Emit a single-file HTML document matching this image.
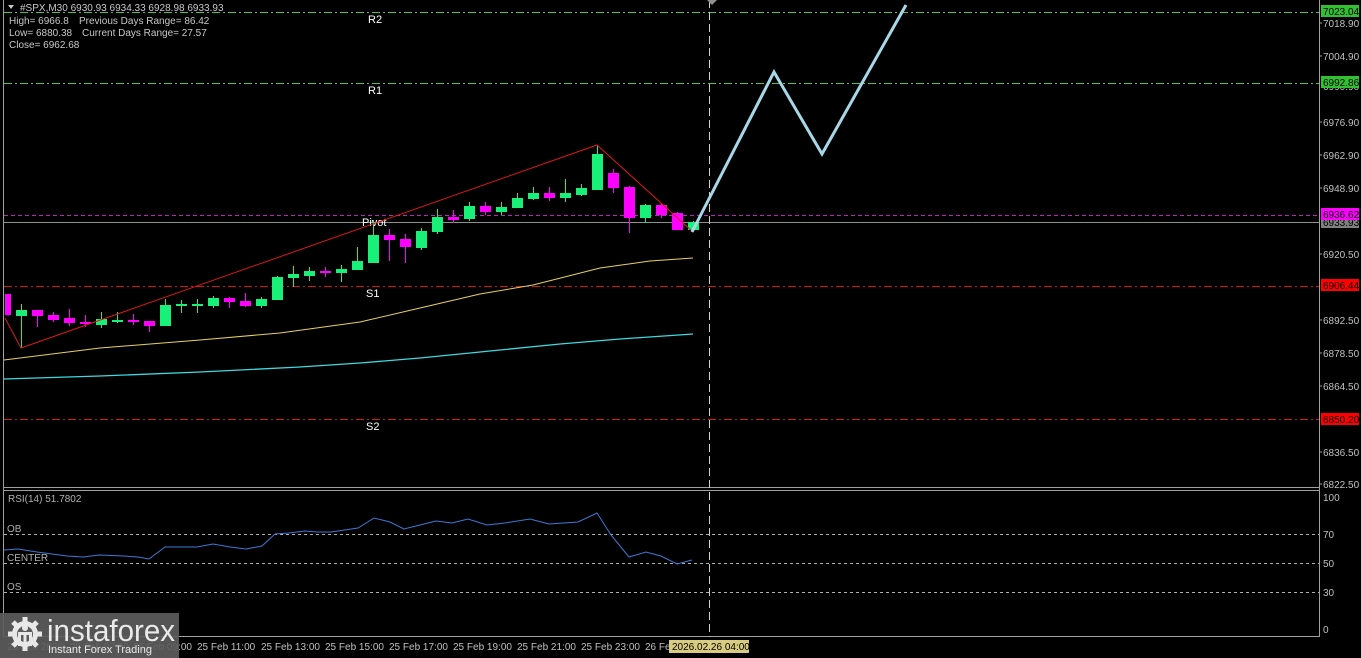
<!DOCTYPE html>
<html><head><meta charset="utf-8"><style>
html,body{margin:0;padding:0;background:#000;width:1361px;height:658px;overflow:hidden}
svg{display:block}
text{font-family:"Liberation Sans",sans-serif}
</style></head><body>
<svg width="1361" height="658" viewBox="0 0 1361 658" xmlns="http://www.w3.org/2000/svg">
<rect width="1361" height="658" fill="#000"/>
<line x1="3.5" y1="0" x2="3.5" y2="637" stroke="#a0a0a0"/>
<line x1="1319.5" y1="0" x2="1319.5" y2="637" stroke="#a0a0a0"/>
<line x1="3" y1="487.5" x2="1320" y2="487.5" stroke="#a0a0a0"/>
<line x1="3" y1="490.5" x2="1320" y2="490.5" stroke="#a0a0a0"/>
<line x1="3" y1="636.5" x2="1320" y2="636.5" stroke="#a0a0a0"/>

<g stroke-width="1" fill="none">
<line x1="4" y1="12.5" x2="1319" y2="12.5" stroke="#4cc24c" stroke-dasharray="8,3,2,3"/>
<line x1="4" y1="83.5" x2="1319" y2="83.5" stroke="#4cc24c" stroke-dasharray="8,3,2,3"/>
<line x1="4" y1="215.5" x2="1319" y2="215.5" stroke="#c020c0" stroke-dasharray="4,3"/>
<line x1="4" y1="222.5" x2="1319" y2="222.5" stroke="#909090"/>
<line x1="4" y1="286.5" x2="1319" y2="286.5" stroke="#d01818" stroke-dasharray="8,3,2,3"/>
<line x1="4" y1="419.5" x2="1319" y2="419.5" stroke="#d01818" stroke-dasharray="8,3,2,3"/>
<line x1="4" y1="534.5" x2="1319" y2="534.5" stroke="#b0b0b0" stroke-dasharray="3,3"/>
<line x1="4" y1="563.5" x2="1319" y2="563.5" stroke="#b0b0b0" stroke-dasharray="3,3"/>
<line x1="4" y1="592.5" x2="1319" y2="592.5" stroke="#b0b0b0" stroke-dasharray="3,3"/>
</g>
<line x1="709.5" y1="0" x2="709.5" y2="637" stroke="#d8d0b0" stroke-dasharray="8,4"/>
<path d="M707 0 L717 0 L712 5 Z" fill="#909090"/>

<g fill="#fff" font-size="11">
<text x="368" y="23">R2</text>
<text x="368" y="94">R1</text>
<text x="362" y="226">Pivot</text>
<text x="366" y="297">S1</text>
<text x="366" y="430">S2</text>
</g>

<polyline points="4,360 100,348 200,340 280,333 360,322 420,308 480,294 533,285 600,268 650,261 693,258" fill="none" stroke="#e8d060" stroke-width="1"/>
<polyline points="4,379 100,376 200,372 300,367 360,363 420,358 500,350 560,344 620,339 693,334" fill="none" stroke="#40d8e0" stroke-width="1.3"/>

<g stroke-width="1">
<line x1="8" y1="294" x2="8" y2="316" stroke="#ff00ff"/>
<line x1="21.5" y1="304" x2="21.5" y2="348" stroke="#19f07a"/>
<line x1="37.5" y1="310" x2="37.5" y2="327" stroke="#ff00ff"/>
<line x1="53.5" y1="312" x2="53.5" y2="322" stroke="#ff00ff"/>
<line x1="69.5" y1="309" x2="69.5" y2="326" stroke="#ff00ff"/>
<line x1="85.5" y1="315" x2="85.5" y2="327" stroke="#ff00ff"/>
<line x1="101.5" y1="312" x2="101.5" y2="328" stroke="#19f07a"/>
<line x1="117.5" y1="312" x2="117.5" y2="323" stroke="#19f07a"/>
<line x1="133.5" y1="314" x2="133.5" y2="325" stroke="#ff00ff"/>
<line x1="149.5" y1="321" x2="149.5" y2="332" stroke="#ff00ff"/>
<line x1="165.5" y1="299" x2="165.5" y2="326" stroke="#19f07a"/>
<line x1="181.5" y1="300" x2="181.5" y2="313" stroke="#19f07a"/>
<line x1="197.5" y1="299" x2="197.5" y2="313" stroke="#19f07a"/>
<line x1="213.5" y1="296" x2="213.5" y2="308" stroke="#19f07a"/>
<line x1="229.5" y1="297" x2="229.5" y2="308" stroke="#ff00ff"/>
<line x1="245.5" y1="293" x2="245.5" y2="307" stroke="#ff00ff"/>
<line x1="261.5" y1="297" x2="261.5" y2="308" stroke="#19f07a"/>
<line x1="277.5" y1="276" x2="277.5" y2="300" stroke="#19f07a"/>
<line x1="293.5" y1="266" x2="293.5" y2="287" stroke="#19f07a"/>
<line x1="309.5" y1="267" x2="309.5" y2="281" stroke="#19f07a"/>
<line x1="325.5" y1="267" x2="325.5" y2="277" stroke="#ff00ff"/>
<line x1="341.5" y1="265" x2="341.5" y2="282" stroke="#19f07a"/>
<line x1="357.5" y1="247" x2="357.5" y2="270" stroke="#19f07a"/>
<line x1="373.5" y1="220" x2="373.5" y2="263" stroke="#19f07a"/>
<line x1="389.5" y1="229" x2="389.5" y2="261" stroke="#ff00ff"/>
<line x1="405.5" y1="234" x2="405.5" y2="263" stroke="#ff00ff"/>
<line x1="421.5" y1="228" x2="421.5" y2="250" stroke="#19f07a"/>
<line x1="437.5" y1="209" x2="437.5" y2="234" stroke="#19f07a"/>
<line x1="453.5" y1="210" x2="453.5" y2="223" stroke="#ff00ff"/>
<line x1="469.5" y1="202" x2="469.5" y2="221" stroke="#19f07a"/>
<line x1="485.5" y1="202" x2="485.5" y2="215" stroke="#ff00ff"/>
<line x1="501.5" y1="202" x2="501.5" y2="215" stroke="#19f07a"/>
<line x1="517.5" y1="193" x2="517.5" y2="208" stroke="#19f07a"/>
<line x1="533.5" y1="187" x2="533.5" y2="200" stroke="#19f07a"/>
<line x1="549.5" y1="187" x2="549.5" y2="201" stroke="#ff00ff"/>
<line x1="565.5" y1="179" x2="565.5" y2="202" stroke="#19f07a"/>
<line x1="581.5" y1="184" x2="581.5" y2="196" stroke="#19f07a"/>
<line x1="597.5" y1="145" x2="597.5" y2="190" stroke="#19f07a"/>
<line x1="613.5" y1="169" x2="613.5" y2="193" stroke="#ff00ff"/>
<line x1="629.5" y1="186" x2="629.5" y2="233" stroke="#ff00ff"/>
<line x1="645.5" y1="204" x2="645.5" y2="223" stroke="#19f07a"/>
<line x1="661.5" y1="203" x2="661.5" y2="218" stroke="#ff00ff"/>
<line x1="677.5" y1="212" x2="677.5" y2="230" stroke="#ff00ff"/>
<line x1="693.5" y1="221" x2="693.5" y2="231" stroke="#19f07a"/>
</g>
<g>
<rect x="5" y="294" width="6" height="21" fill="#ff00ff"/>
<rect x="16" y="310" width="11" height="6" fill="#19f07a"/>
<rect x="32" y="310" width="11" height="6" fill="#ff00ff"/>
<rect x="48" y="315" width="11" height="5" fill="#ff00ff"/>
<rect x="64" y="318" width="11" height="5" fill="#ff00ff"/>
<rect x="80" y="322" width="11" height="2" fill="#ff00ff"/>
<rect x="96" y="319" width="11" height="6" fill="#19f07a"/>
<rect x="112" y="320" width="11" height="2" fill="#19f07a"/>
<rect x="128" y="320" width="11" height="2" fill="#ff00ff"/>
<rect x="144" y="321" width="11" height="5" fill="#ff00ff"/>
<rect x="160" y="305" width="11" height="21" fill="#19f07a"/>
<rect x="176" y="304" width="11" height="2" fill="#19f07a"/>
<rect x="192" y="304" width="11" height="2" fill="#19f07a"/>
<rect x="208" y="298" width="11" height="8" fill="#19f07a"/>
<rect x="224" y="298" width="11" height="4" fill="#ff00ff"/>
<rect x="240" y="301" width="11" height="5" fill="#ff00ff"/>
<rect x="256" y="299" width="11" height="7" fill="#19f07a"/>
<rect x="272" y="277" width="11" height="23" fill="#19f07a"/>
<rect x="288" y="274" width="11" height="4" fill="#19f07a"/>
<rect x="304" y="271" width="11" height="5" fill="#19f07a"/>
<rect x="320" y="271" width="11" height="2" fill="#ff00ff"/>
<rect x="336" y="269" width="11" height="4" fill="#19f07a"/>
<rect x="352" y="261" width="11" height="9" fill="#19f07a"/>
<rect x="368" y="235" width="11" height="28" fill="#19f07a"/>
<rect x="384" y="235" width="11" height="5" fill="#ff00ff"/>
<rect x="400" y="239" width="11" height="8" fill="#ff00ff"/>
<rect x="416" y="231" width="11" height="17" fill="#19f07a"/>
<rect x="432" y="217" width="11" height="15" fill="#19f07a"/>
<rect x="448" y="217" width="11" height="3" fill="#ff00ff"/>
<rect x="464" y="206" width="11" height="13" fill="#19f07a"/>
<rect x="480" y="206" width="11" height="6" fill="#ff00ff"/>
<rect x="496" y="207" width="11" height="5" fill="#19f07a"/>
<rect x="512" y="198" width="11" height="10" fill="#19f07a"/>
<rect x="528" y="193" width="11" height="6" fill="#19f07a"/>
<rect x="544" y="193" width="11" height="5" fill="#ff00ff"/>
<rect x="560" y="193" width="11" height="5" fill="#19f07a"/>
<rect x="576" y="188" width="11" height="7" fill="#19f07a"/>
<rect x="592" y="154" width="11" height="36" fill="#19f07a"/>
<rect x="608" y="173" width="11" height="15" fill="#ff00ff"/>
<rect x="624" y="187" width="11" height="31" fill="#ff00ff"/>
<rect x="640" y="205" width="11" height="13" fill="#19f07a"/>
<rect x="656" y="205" width="11" height="10" fill="#ff00ff"/>
<rect x="672" y="213" width="11" height="17" fill="#ff00ff"/>
<rect x="688" y="222" width="11" height="8" fill="#19f07a"/>
</g>

<polyline points="5,318 21,348 597,145 693,232" fill="none" stroke="#e01818" stroke-width="1"/>
<polyline points="692,232 774,72 822,154 906,5" fill="none" stroke="#a8d8e8" stroke-width="3" stroke-linejoin="miter"/>

<g fill="#c8c8c8" font-size="10">
<path d="M8 5 L14 5 L11 9 Z" fill="#c8c8c8"/>
<text x="20" y="11">#SPX,M30  6930.93 6934.33 6928.98 6933.93</text>
<text x="9" y="24">High= 6966.8</text>
<text x="79" y="24">Previous Days Range= 86.42</text>
<text x="9" y="36">Low= 6880.38</text>
<text x="82" y="36">Current Days Range= 27.57</text>
<text x="9" y="48">Close= 6962.68</text>
</g>

<g font-size="10" fill="#c0c0c0">
<g stroke="#a0a0a0"><line x1="1319" y1="23" x2="1322" y2="23"/><line x1="1319" y1="56" x2="1322" y2="56"/><line x1="1319" y1="122" x2="1322" y2="122"/><line x1="1319" y1="155" x2="1322" y2="155"/><line x1="1319" y1="188" x2="1322" y2="188"/><line x1="1319" y1="254" x2="1322" y2="254"/><line x1="1319" y1="320" x2="1322" y2="320"/><line x1="1319" y1="353" x2="1322" y2="353"/><line x1="1319" y1="386" x2="1322" y2="386"/><line x1="1319" y1="452" x2="1322" y2="452"/><line x1="1319" y1="484" x2="1322" y2="484"/></g>
<text x="1323" y="27">7018.90</text>
<text x="1323" y="60">7004.90</text>
<text x="1323" y="90">6990.90</text>
<text x="1323" y="126">6976.90</text>
<text x="1323" y="159">6962.90</text>
<text x="1323" y="192">6948.90</text>
<text x="1323" y="258">6920.50</text>
<text x="1323" y="324">6892.50</text>
<text x="1323" y="357">6878.50</text>
<text x="1323" y="390">6864.50</text>
<text x="1323" y="456">6836.50</text>
<text x="1323" y="488">6822.50</text>
<rect x="1321" y="5" width="38" height="12" fill="#30c030"/><text x="1323" y="15" fill="#000">7023.04</text>
<rect x="1321" y="76" width="38" height="12" fill="#30c030"/><text x="1323" y="86" fill="#000">6992.86</text>
<rect x="1321" y="216" width="38" height="12" fill="#808080"/><text x="1323" y="226" fill="#000">6933.93</text>
<rect x="1321" y="208" width="38" height="12" fill="#ff00ff"/><text x="1323" y="218" fill="#000">6936.62</text>
<rect x="1321" y="279" width="38" height="12" fill="#ff0000"/><text x="1323" y="289" fill="#000">6906.44</text>
<rect x="1321" y="413" width="38" height="12" fill="#ff0000"/><text x="1323" y="423" fill="#000">6850.20</text>
<text x="1323" y="501">100</text>
<text x="1323" y="538">70</text>
<text x="1323" y="567">50</text>
<text x="1323" y="596">30</text>
<text x="1323" y="633">0</text>
</g>

<g font-size="10" fill="#b0b0b0">
<text x="8" y="502">RSI(14) 51.7802</text>
<text x="7" y="532">OB</text>
<text x="7" y="561">CENTER</text>
<text x="7" y="590">OS</text>
</g>
<polyline fill="none" stroke="#3a7ad8" stroke-width="1" points="4,550 18,549 37,552 67,556 83,557 99,555 124,556 138,557 149,559 165,547 197,547 213,544 230,547 246,549 262,546 275,534 289,533 305,531 317,532 331,532 358,528 374,518 390,522 404,529 420,525 436,521 452,523 468,519 487,525 505,523 530,519 549,524 578,522 597,513 611,535 629,557 646,552 661,556 677,564 692,560"/>

<g font-size="10" fill="#c0c0c0">
<text x="7" y="650">25 Feb 2026</text>
<text x="70" y="650">25 Feb 07:00</text>
<text x="133" y="650">25 Feb 09:00</text>
<text x="197" y="650">25 Feb 11:00</text>
<text x="261" y="650">25 Feb 13:00</text>
<text x="325" y="650">25 Feb 15:00</text>
<text x="389" y="650">25 Feb 17:00</text>
<text x="453" y="650">25 Feb 19:00</text>
<text x="517" y="650">25 Feb 21:00</text>
<text x="581" y="650">25 Feb 23:00</text>
<text x="645" y="650">26 Feb</text>
<rect x="669" y="640" width="80" height="13" fill="#d8cc80"/>
<text x="672" y="650" fill="#000">2026.02.26 04:00</text>
</g>

<rect x="0" y="613" width="179" height="45" fill="#5c5c5c" fill-opacity="0.92"/>
<g fill="#e8e8e8">
<circle cx="25" cy="634" r="13"/>
<g stroke="#e8e8e8" stroke-width="5">
<line x1="25" y1="617" x2="25" y2="651"/><line x1="8" y1="634" x2="42" y2="634"/>
<line x1="13" y1="622" x2="37" y2="646"/><line x1="37" y1="622" x2="13" y2="646"/>
</g>
<circle cx="25" cy="634" r="8" fill="#5c5c5c"/>
<circle cx="25" cy="628" r="3"/>
<rect x="18" y="632" width="14" height="3"/>
<rect x="18" y="632" width="3" height="14"/>
<rect x="29" y="632" width="3" height="14"/>
<rect x="23.5" y="632" width="3" height="16"/>
</g>
<text x="47" y="641" font-size="31" fill="#eaeaea" textLength="128" lengthAdjust="spacingAndGlyphs">instaforex</text>
<text x="48" y="653" font-size="11" fill="#eaeaea">Instant Forex Trading</text>
</svg>
</body></html>
